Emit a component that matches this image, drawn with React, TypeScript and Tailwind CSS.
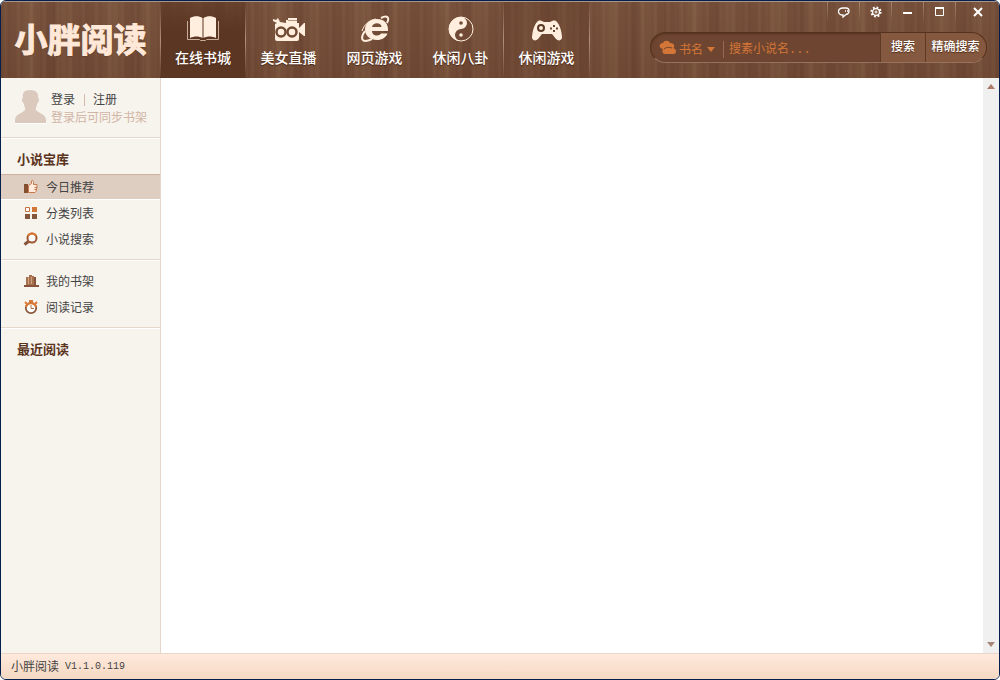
import type { ReactNode } from "react";

const cream = "#ffeedd";

const woodStyle =
  "bg-[#754e39] bg-[linear-gradient(180deg,rgba(255,225,190,0.03),rgba(60,25,10,0.06)),repeating-linear-gradient(90deg,rgba(60,25,10,0.09)_0px,rgba(60,25,10,0)_2px,rgba(255,220,180,0.04)_5px,rgba(60,25,10,0.06)_7px,rgba(60,25,10,0)_13px),repeating-linear-gradient(90deg,rgba(50,20,5,0.08)_0px,rgba(50,20,5,0)_19px,rgba(170,145,100,0.13)_31px,rgba(50,20,5,0)_37px,rgba(50,20,5,0.12)_53px,rgba(160,130,90,0.1)_61px,rgba(50,20,5,0.08)_83px)]";

const fadeLine = "[border-image:linear-gradient(to_bottom,transparent,#b0907c_50%,transparent)_1]";

function BookIcon() {
  return (
    <svg width="34" height="28" viewBox="0 0 34 28" aria-hidden="true">
      <path d="M1.500 6v18.500h12l1 1h5l1-1h12V6" fill="none" stroke="#c9ae9d" />
      <path d="M4 3C8 .6 13 .6 16.500 3v20C13 21 8 21 4 23Z" fill={cream} />
      <path d="M17.500 3C21 .6 26 .6 30 3v20c-4-2-9-2-12.500 0Z" fill={cream} />
    </svg>
  );
}

function CameraIcon() {
  return (
    <svg width="34" height="28" viewBox="0 0 34 28" aria-hidden="true">
      <path d="M1 4l3 1 2-2 2 4 6 1V5h2V3h9v5h2v5l5-5h1v13h-1l-5-4v7q0 2-2 2H5q-2 0-2-2V9l2-1-4-2Z" fill={cream} />
      <path d="M16 5.500h9" stroke="#b79581" />
      <circle cx="9" cy="17" r="4.500" fill={cream} stroke="#704a35" strokeWidth="2.500" />
      <circle cx="20" cy="17" r="4.500" fill={cream} stroke="#704a35" strokeWidth="2.500" />
    </svg>
  );
}

function BrowserIcon() {
  return (
    <svg width="30" height="28" viewBox="0 0 30 28" aria-hidden="true">
      <path d="M27.500 18.500C26 22.500 22 25 17 25 10 25 5 20.500 5 14.500S10 4 17 4c8 0 11.500 5 11 12H12c0 5.500 7.500 5.500 9 2.500Z" fill={cream} />
      <path d="M12 12h9.500c0-5-9-5-9.500 0Z" fill="#75503b" />
      <path d="M21 3c6-3 9-1 6 5M5 16C0 23 1 29 12 24" fill="none" stroke={cream} strokeWidth="2" />
      <path d="M2 16C4 10 9 5 16 4" fill="none" stroke={cream} />
    </svg>
  );
}

function TaijiIcon() {
  return (
    <svg width="28" height="28" viewBox="0 0 28 28" aria-hidden="true">
      <circle cx="14" cy="14" r="12" fill="#704a35" stroke={cream} />
      <path d="M14 2a12 12 0 0 0 0 24 6 6 0 0 1 0-12 6 6 0 0 0 0-12Z" fill={cream} />
      <circle cx="14" cy="8" r="1.800" fill="#704a35" />
      <circle cx="14" cy="20" r="1.800" fill={cream} />
    </svg>
  );
}

function GamepadIcon() {
  return (
    <svg width="32" height="28" viewBox="0 0 32 28" aria-hidden="true">
      <path d="M7 6c2-1 4 0 6 1h6c2-1 4-2 6-1 4 3 6 12 6 17-1 3-4 3-6 1l-4-5H11l-4 5c-2 2-5 2-6-1 0-5 2-14 6-17Z" fill={cream} />
      <circle cx="10" cy="13" r="3" fill="none" stroke="#5b3a28" strokeWidth="2" />
      <path d="M22 10h2v2h-2zM22 15h2v2h-2zM19 12.500h2v2h-2zM25 12.500h2v2h-2z" fill="#6b4532" />
    </svg>
  );
}

const tabs: { label: string; icon: ReactNode; look: string }[] = [
  { label: "在线书城", icon: <BookIcon />, look: `border-x bg-linear-to-b from-[#5b3622]/60 to-[#5b3622] to-40% ${fadeLine}` },
  { label: "美女直播", icon: <CameraIcon />, look: "border-r border-transparent" },
  { label: "网页游戏", icon: <BrowserIcon />, look: "border-r border-transparent" },
  { label: "休闲八卦", icon: <TaijiIcon />, look: `border-r ${fadeLine}` },
  { label: "休闲游戏", icon: <GamepadIcon />, look: `border-r bg-linear-to-b from-[#5b3622]/30 to-[#5b3622]/10 ${fadeLine}` },
];

function WindowButtons() {
  const base = "flex h-5 w-8 items-center justify-center border-l [border-image:linear-gradient(to_bottom,#a58672,transparent)_1]";
  return (
    <div className="flex">
      <button className={base} aria-label="反馈">
        <svg width="12" height="12" viewBox="0 0 12 12" fill="none" stroke="#fff" strokeWidth="1.300">
          <path d="M5 9C-1 9-1 2 5 2h3c4 0 4 6 0 6.500L5 11Z" />
          <path d="M7 5h1M9 5h1" />
        </svg>
      </button>
      <button className={base} aria-label="设置">
        <svg width="12" height="12" viewBox="0 0 12 12" fill="none" stroke="#fff">
          <circle cx="6" cy="6" r="4.600" strokeWidth="2" strokeDasharray="1.800 1.800" />
          <circle cx="6" cy="6" r="3.400" strokeWidth="1.300" />
          <circle cx="6" cy="6" r="1" />
        </svg>
      </button>
      <button className={base} aria-label="最小化">
        <svg width="10" height="12" viewBox="0 0 10 12"><path d="M0 6h9v2H0z" fill="#fff" /></svg>
      </button>
      <button className={base} aria-label="最大化">
        <svg width="10" height="12" viewBox="0 0 10 12"><path d="M.5 2v7.500h8V2" fill="none" stroke="#fff" /><path d="M0 1h9v2H0z" fill="#fff" /></svg>
      </button>
      <button className={`${base} w-11`} aria-label="关闭">
        <svg width="10" height="12" viewBox="0 0 10 12"><path d="M1 2l8 8M9 2L1 10" stroke="#fff" strokeWidth="2" /></svg>
      </button>
    </div>
  );
}

function SearchBar() {
  const action = "border-l border-[#5e3924] bg-[#85593f] pb-px text-xs font-medium text-white text-shadow-[0_1px_1px_#4b2817]";
  return (
    <form
      className="mr-3 flex h-[31px] w-[337px] overflow-hidden rounded-full border border-[#55321e] border-b-[#96735f] bg-[#6e4530] text-xs text-[#d37637] inset-shadow-[0_1px_2px_#55321e]"
      onSubmit={(e) => e.preventDefault()}
    >
      <button type="button" className="mt-2 mb-1 flex w-[73px] items-center border-r border-[#966a50] pl-2">
        <svg width="18" height="16" viewBox="0 0 18 16" className="mr-0.5 mb-1" aria-hidden="true">
          <path d="M4 9C-1 8 0 3 4 3c1-3 6-3 7 0 5 0 5 4 3 5 4 1 4 6 0 6H6c-3 0-3-4-2-5Z" fill="#d37637" />
          <path d="M5 9c2-2 5-2 8-1" fill="none" stroke="#6e4530" />
        </svg>
        书名
        <svg width="8" height="5" viewBox="0 0 8 5" className="ml-1" aria-hidden="true"><path d="M0 0h8L4 5Z" fill="#d37637" /></svg>
      </button>
      <input
        aria-label="搜索小说"
        placeholder="搜素小说名..."
        className="min-w-0 flex-1 bg-transparent px-[5px] pt-1 font-['Liberation_Mono','Noto_Sans_CJK_SC',monospace] text-xs outline-none placeholder:text-[#d37637]"
      />
      <button type="submit" className={`w-[45px] ${action}`}>搜索</button>
      <button type="button" className={`w-[61px] pr-px ${action}`}>精确搜索</button>
    </form>
  );
}

function ThumbIcon() {
  return (
    <svg width="16" height="16" viewBox="0 0 16 16" aria-hidden="true">
      <path d="M1 5h4v9H1z" fill="#85502f" />
      <path d="M5.500 6.500l3-2V2c1-1.500 2.500 0 2 3.500h3.500v2.500l-1 4.500-1 1H5.500Z" fill="#ffeadb" stroke="#c7784b" />
      <path d="M11.500 8.500h2.500M11.500 10.500h2" stroke="#c7784b" />
    </svg>
  );
}

function GridIcon() {
  return (
    <svg width="16" height="16" viewBox="0 0 16 16" aria-hidden="true">
      <path d="M2.500 2.500h4v4h-4z" fill="#fff" stroke="#c2713f" />
      <path d="M9 2h5v5H9z" fill="#d27638" />
      <path d="M2 9h5v5H2zM9 9h5v5H9z" fill="#85543a" />
    </svg>
  );
}

function SearchIcon() {
  return (
    <svg width="16" height="16" viewBox="0 0 16 16" fill="none" aria-hidden="true">
      <path d="M1.500 13.500L6 10" stroke="#85543a" strokeWidth="3" />
      <circle cx="9" cy="7" r="4.500" fill="#fff" stroke="#9c5833" strokeWidth="2" />
      <path d="M5 5a4.500 4.500 0 0 1 8 0" stroke="#dc7936" strokeWidth="2" />
    </svg>
  );
}

function ShelfIcon() {
  return (
    <svg width="16" height="16" viewBox="0 0 16 16" aria-hidden="true">
      <path d="M3 4h3v8H3zM6 2h3v10H6zM9 3h2v9H9z" fill="#a8714e" />
      <path d="M11 4h2v8h-2zM1 12h15v2H1z" fill="#85543a" />
      <path d="M5.500 4v7M8.500 4v7" stroke="#cfa489" />
    </svg>
  );
}

function ClockIcon() {
  return (
    <svg width="16" height="16" viewBox="0 0 16 16" fill="none" aria-hidden="true">
      <circle cx="8" cy="9" r="5.200" fill="#fff" stroke="#8a583b" strokeWidth="1.800" />
      <path d="M3 8a5.200 5.200 0 0 1 10 0M6 2h4M2 3l2 2M14 3l-2 2" stroke="#dc7936" strokeWidth="2" />
      <path d="M8 6v3.500h3" stroke="#a86e4a" />
    </svg>
  );
}

function MenuItem({ icon, label, active = false }: { icon: ReactNode; label: string; active?: boolean }) {
  return (
    <a
      href="#"
      className={`flex h-[26px] items-center gap-[7px] pl-[22px] ${active ? "border-t border-b border-t-[#cfb2a2] border-b-white bg-[#decdc1]" : ""}`}
    >
      {icon}
      <span className="pt-px">{label}</span>
    </a>
  );
}

function SectionTitle({ children }: { children: ReactNode }) {
  return <h2 className="flex h-9 items-center pt-2 pl-4 text-[13px] font-bold text-[#5b3420]">{children}</h2>;
}

const sectionLine = "border-b border-[#e6d7cd] shadow-[0_1px_0_#fff]";

function Sidebar() {
  return (
    <aside className="w-40 shrink-0 border-r border-[#e6d7cd] bg-[#f7f3ed]">
      <div className={`flex h-[60px] items-start pt-2.5 pl-3 ${sectionLine}`}>
        <svg width="34" height="36" viewBox="0 0 34 36" className="mr-1 shrink-0" aria-hidden="true">
          <path d="M17 2c-5 0-8 3-7 9-2 0-1 4 1 6 1 2 2 4 1 6-2 3-10 4-10 10v3h31v-3c0-6-8-7-10-10-1-2 0-4 1-6 2-2 3-6 1-6 1-6-3-9-8-9Z" fill="#fff" />
          <path d="M17 2c-6 0-8 3-7 8-2 0-1 4 1 6 0 3 2 4 1 6-2 3-10 4-10 10v3h31v-3c0-6-8-7-10-10-1-2 1-3 1-6 2-2 3-6 1-6 1-5-2-8-8-8Z" fill="#dac9bc" />
        </svg>
        <div className="pt-[3px] leading-[18px]">
          <div className="flex items-center">
            <a href="#">登录</a>
            <span className="mr-2 ml-[9px] h-3 w-px bg-[#d2b9ab]" />
            <a href="#">注册</a>
          </div>
          <p className="text-[#d1b5a5]">登录后可同步书架</p>
        </div>
      </div>
      <nav>
        <SectionTitle>小说宝库</SectionTitle>
        <div className={`pb-[7px] ${sectionLine}`}>
          <MenuItem icon={<ThumbIcon />} label="今日推荐" active />
          <MenuItem icon={<GridIcon />} label="分类列表" />
          <MenuItem icon={<SearchIcon />} label="小说搜索" />
        </div>
        <div className={`pt-2 pb-[7px] ${sectionLine}`}>
          <MenuItem icon={<ShelfIcon />} label="我的书架" />
          <MenuItem icon={<ClockIcon />} label="阅读记录" />
        </div>
        <SectionTitle>最近阅读</SectionTitle>
      </nav>
    </aside>
  );
}

export default function App() {
  return (
    <div className="flex h-screen flex-col overflow-hidden rounded-md border border-[#041f4d] bg-white font-['Liberation_Sans','Noto_Sans_CJK_SC',sans-serif] text-xs text-[#444]">
      <header className={`flex h-[77px] shrink-0 border-t border-[#a8968b] ${woodStyle}`}>
        <h1 className="flex w-[159px] shrink-0 items-center justify-center pt-0.5 text-[33px] font-bold text-[#ffe8d8] text-shadow-[0_1px_1px_#5b3622] [-webkit-text-stroke:1px_#ffe8d8]">
          小胖阅读
        </h1>
        <nav className="flex">
          {tabs.map((tab) => (
            <a key={tab.label} href="#" className={`flex w-[86px] flex-col items-center pt-3 text-sm font-medium text-white text-shadow-[0_1px_1px_#4b2817] ${tab.look}`}>
              <span className="flex h-[30px] items-center">{tab.icon}</span>
              <span className="mt-1 leading-5">{tab.label}</span>
            </a>
          ))}
        </nav>
        <div className="ml-auto flex flex-col items-end gap-2.5">
          <WindowButtons />
          <SearchBar />
        </div>
      </header>
      <div className="flex min-h-0 flex-1">
        <Sidebar />
        <main className="flex-1 bg-white" />
        <div className="flex w-4 shrink-0 flex-col items-center justify-between bg-[#f0f0f0] py-1.5">
          <svg width="8" height="5" viewBox="0 0 8 5" aria-hidden="true"><path d="M4 0l4 5H0Z" fill="#ab7b68" /></svg>
          <svg width="8" height="5" viewBox="0 0 8 5" aria-hidden="true"><path d="M0 0h8L4 5Z" fill="#a78778" /></svg>
        </div>
      </div>
      <footer className="flex h-[26px] shrink-0 items-center border-t border-[#ecd5c6] bg-linear-to-b from-[#ffeadd] to-[#f5d8c2] pl-2.5">
        <span>小胖阅读</span>
        <span className="ml-1.5 font-['Liberation_Mono',monospace] text-[10px]">V1.1.0.119</span>
      </footer>
    </div>
  );
}
